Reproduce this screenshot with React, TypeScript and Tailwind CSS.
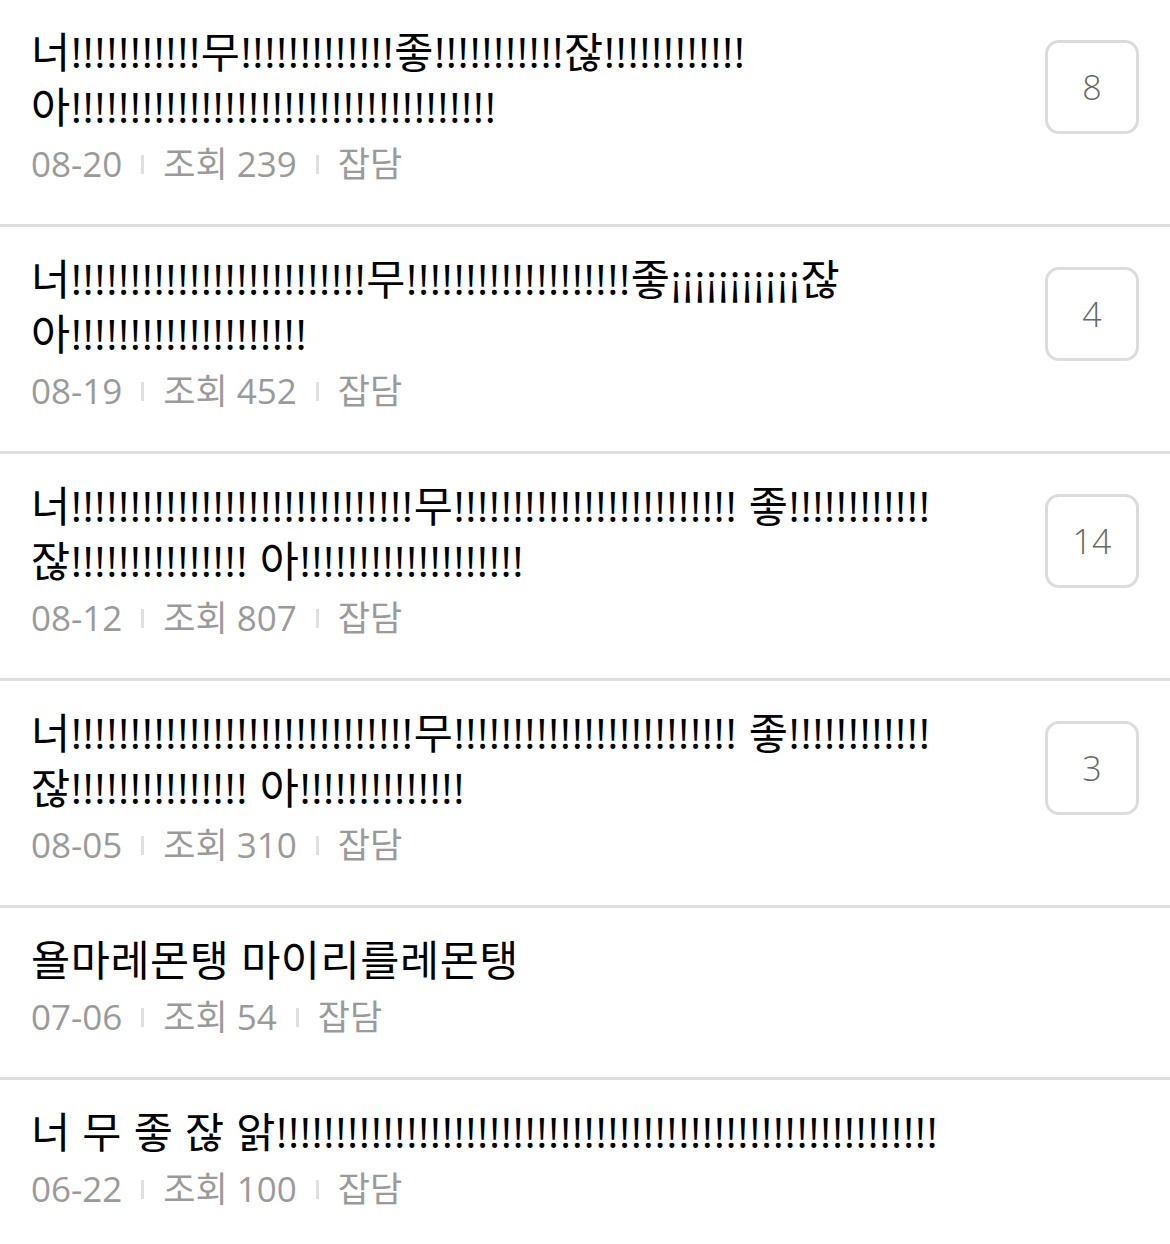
const posts = [
  {
    lines: ["너!!!!!!!!!!!무!!!!!!!!!!!!!좋!!!!!!!!!!!잖!!!!!!!!!!!!", "아!!!!!!!!!!!!!!!!!!!!!!!!!!!!!!!!!!!!"],
    date: "08-20",
    views: 239,
    count: 8,
  },
  {
    lines: ["너!!!!!!!!!!!!!!!!!!!!!!!!!무!!!!!!!!!!!!!!!!!!!좋¡¡¡¡¡¡¡¡¡¡¡잖", "아!!!!!!!!!!!!!!!!!!!!"],
    date: "08-19",
    views: 452,
    count: 4,
  },
  {
    lines: ["너!!!!!!!!!!!!!!!!!!!!!!!!!!!!!무!!!!!!!!!!!!!!!!!!!!!!!! 좋!!!!!!!!!!!!", "잖!!!!!!!!!!!!!!! 아!!!!!!!!!!!!!!!!!!!"],
    date: "08-12",
    views: 807,
    count: 14,
  },
  {
    lines: ["너!!!!!!!!!!!!!!!!!!!!!!!!!!!!!무!!!!!!!!!!!!!!!!!!!!!!!! 좋!!!!!!!!!!!!", "잖!!!!!!!!!!!!!!! 아!!!!!!!!!!!!!!"],
    date: "08-05",
    views: 310,
    count: 3,
  },
  {
    lines: ["욜마레몬탱 마이리를레몬탱"],
    date: "07-06",
    views: 54,
  },
  {
    lines: ["너 무 좋 잖 앍!!!!!!!!!!!!!!!!!!!!!!!!!!!!!!!!!!!!!!!!!!!!!!!!!!!!!!!!"],
    date: "06-22",
    views: 100,
  },
];

function Sep() {
  return <span className="mx-[19px] inline-block h-[19px] w-[3px] bg-[#e0e0e0]" />;
}

export default function App() {
  return (
    <main
      className="min-h-screen bg-white"
      style={{ fontFamily: '"Open Sans", "Noto Sans CJK KR", sans-serif' }}
    >
      {posts.map((p, i) => (
        <div key={i} className="flex border-b-[3px] border-[#dedede] pl-[31px] pr-[31px] pt-[24px] pb-[36px]">
          <div className="flex-1 min-w-0">
            <div className="text-[42.5px] leading-[55px] tracking-[0.6px] text-black whitespace-nowrap">
              {p.lines.map((l, j) => (
                <div key={j}>{l}</div>
              ))}
            </div>
            <div className="mt-[6px] flex items-center text-[35px] leading-[48px] text-[#9a9a9a]">
              <span>{p.date}</span>
              <Sep />
              <span>조회 {p.views}</span>
              <Sep />
              <span>잡담</span>
            </div>
          </div>
          {p.count !== undefined && (
            <div className="mt-[16px] flex h-[94px] w-[94px] shrink-0 items-center justify-center rounded-[14px] border-[3px] border-[#dcdcdc] text-[34px] font-light text-[#666666]">
              {p.count}
            </div>
          )}
        </div>
      ))}
    </main>
  );
}
